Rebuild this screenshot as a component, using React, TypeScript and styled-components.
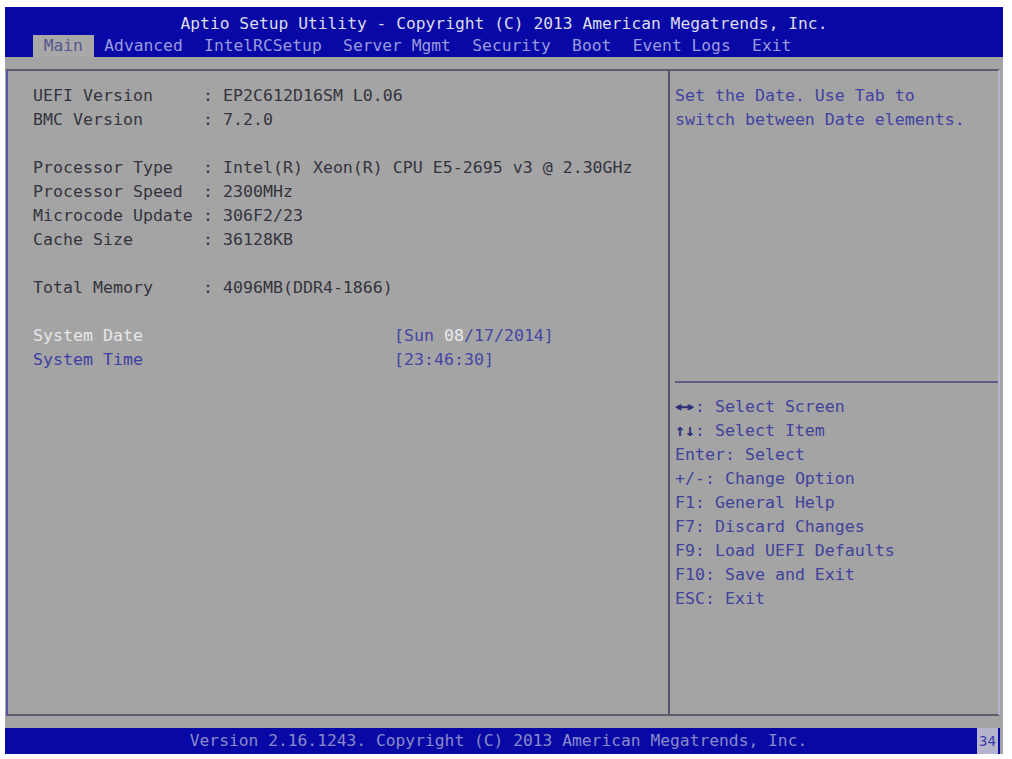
import styled, { createGlobalStyle } from "styled-components";

const GlobalStyle = createGlobalStyle`
  html, body {
    margin: 0;
    padding: 0;
    background: #ffffff;
  }
`;

const mono = `"DejaVu Sans Mono", "Liberation Mono", monospace`;

const Screen = styled.div`
  width: 998px;
  margin: 7px 0 0 5px;
  background: #a4a4a4;
  display: flex;
  flex-direction: column;
  font-family: ${mono};
  font-size: 16.6px;
`;

const Header = styled.header`
  height: 50px;
  background: #0808a6;
  display: flex;
  flex-direction: column;
`;

const Title = styled.div`
  padding-top: 6px;
  line-height: 22px;
  text-align: center;
  font-size: 16.3px;
  color: #dcdcec;
  white-space: pre;
`;

const TabRow = styled.nav`
  display: flex;
  height: 22px;
  padding-left: 28px;
`;

const Tab = styled.span<{ $active?: boolean }>`
  padding: 0 10.7px;
  line-height: 22px;
  font-size: 16.3px;
  white-space: pre;
  color: ${(p) => (p.$active ? "#56568e" : "#9a9ade")};
  background: ${(p) => (p.$active ? "#a8a8a8" : "transparent")};
`;

const Panel = styled.main`
  margin: 12px 3px 0 1px;
  height: 647px;
  box-sizing: border-box;
  border-top: 2px solid #5a5a6a;
  border-bottom: 2px solid #5e5e6e;
  border-left: 2px solid #5656a0;
  border-right: 2px solid #b4b4d0;
  display: grid;
  grid-template-columns: 662px 1fr;
`;

const MainColumn = styled.section`
  padding: 13px 0 0 25px;
  border-right: 2px solid #54546e;
`;

const SideColumn = styled.aside`
  display: flex;
  flex-direction: column;
`;

const HelpText = styled.div`
  height: 310px;
  box-sizing: border-box;
  padding: 13px 0 0 5px;
  line-height: 24px;
  color: #4242a0;
  white-space: pre;
`;

const Divider = styled.hr`
  margin: 0 0 0 5px;
  border: none;
  border-top: 2px solid #5c5c86;
`;

const KeyList = styled.ul`
  list-style: none;
  margin: 0;
  padding: 12px 0 0 5px;
  line-height: 24px;
  color: #42429c;
  white-space: pre;
`;

const Arrows = styled.span<{ $wide?: boolean }>`
  display: inline-block;
  width: 2ch;
  font-weight: bold;
  color: #2e2e7a;
  transform: ${(p) => (p.$wide ? "scaleX(2)" : "none")};
  transform-origin: left center;
`;

const InfoRow = styled.div`
  display: grid;
  grid-template-columns: 170px 1fr;
  line-height: 24px;
  color: #34343e;
  white-space: pre;
`;

const Gap = styled.div`
  height: 24px;
`;

const ItemRow = styled.div`
  display: grid;
  grid-template-columns: 361px 1fr;
  line-height: 24px;
  white-space: pre;
`;

const ItemLabel = styled.span<{ $selected?: boolean }>`
  color: ${(p) => (p.$selected ? "#e6e6ea" : "#3e3ea2")};
`;

const ItemValue = styled.span`
  color: #4646a4;
`;

const Field = styled.span`
  color: #e8e8ec;
`;

const Footer = styled.footer`
  position: relative;
  margin: 12px 3px 0 0;
  height: 26px;
  line-height: 26px;
  background: #0808a6;
  color: #8a8ac8;
  font-size: 16.3px;
  text-align: center;
  padding-right: 8px;
  white-space: pre;
`;

const PostCode = styled.span`
  position: absolute;
  right: 2px;
  top: 0;
  bottom: 0;
  width: 21px;
  background: #b4b4cc;
  color: #3c3ca8;
  font-size: 14px;
  text-align: center;
`;

const info: [string, string][] = [
  ["UEFI Version", "EP2C612D16SM L0.06"],
  ["BMC Version", "7.2.0"],
  ["", ""],
  ["Processor Type", "Intel(R) Xeon(R) CPU E5-2695 v3 @ 2.30GHz"],
  ["Processor Speed", "2300MHz"],
  ["Microcode Update", "306F2/23"],
  ["Cache Size", "36128KB"],
  ["", ""],
  ["Total Memory", "4096MB(DDR4-1866)"],
  ["", ""],
];

const tabs = [
  "Main",
  "Advanced",
  "IntelRCSetup",
  "Server Mgmt",
  "Security",
  "Boot",
  "Event Logs",
  "Exit",
];

const keys = [
  "Enter: Select",
  "+/-: Change Option",
  "F1: General Help",
  "F7: Discard Changes",
  "F9: Load UEFI Defaults",
  "F10: Save and Exit",
  "ESC: Exit",
];

export default function App() {
  return (
    <>
      <GlobalStyle />
      <Screen>
        <Header>
          <Title>Aptio Setup Utility - Copyright (C) 2013 American Megatrends, Inc.</Title>
          <TabRow>
            {tabs.map((t, i) => (
              <Tab key={t} $active={i === 0}>
                {t}
              </Tab>
            ))}
          </TabRow>
        </Header>

        <Panel>
          <MainColumn>
            {info.map(([label, value], i) =>
              label ? (
                <InfoRow key={i}>
                  <span>{label}</span>
                  <span>: {value}</span>
                </InfoRow>
              ) : (
                <Gap key={i} />
              )
            )}
            <ItemRow>
              <ItemLabel $selected>System Date</ItemLabel>
              <ItemValue>
                [Sun <Field>08</Field>/17/2014]
              </ItemValue>
            </ItemRow>
            <ItemRow>
              <ItemLabel>System Time</ItemLabel>
              <ItemValue>[23:46:30]</ItemValue>
            </ItemRow>
          </MainColumn>

          <SideColumn>
            <HelpText>
              {"Set the Date. Use Tab to\nswitch between Date elements."}
            </HelpText>
            <Divider />
            <KeyList>
              <li>
                <Arrows $wide>↔</Arrows>: Select Screen
              </li>
              <li>
                <Arrows>↑↓</Arrows>: Select Item
              </li>
              {keys.map((k) => (
                <li key={k}>{k}</li>
              ))}
            </KeyList>
          </SideColumn>
        </Panel>

        <Footer>
          Version 2.16.1243. Copyright (C) 2013 American Megatrends, Inc.
          <PostCode>34</PostCode>
        </Footer>
      </Screen>
    </>
  );
}
